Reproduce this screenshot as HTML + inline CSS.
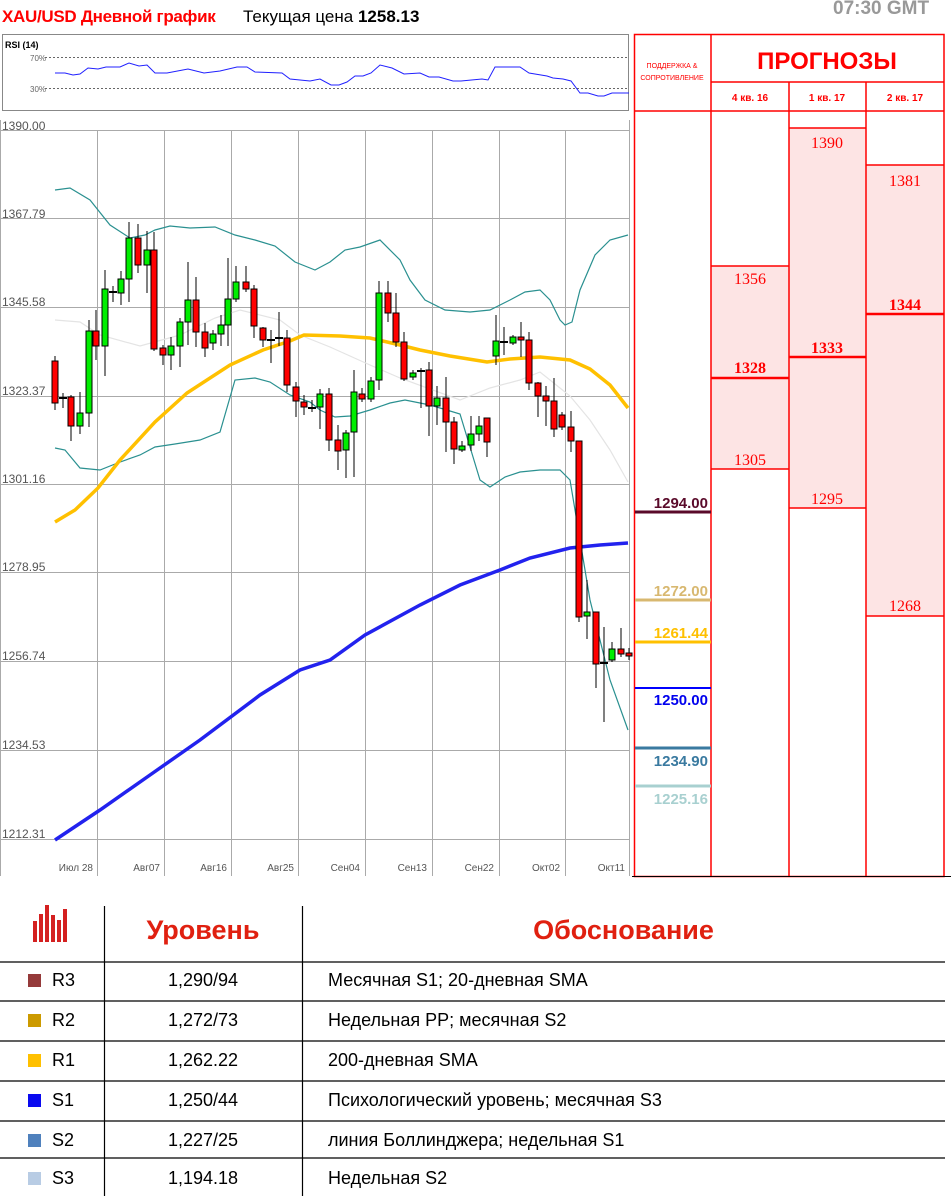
<!DOCTYPE html>
<html><head><meta charset="utf-8">
<style>
*{margin:0;padding:0;box-sizing:border-box}
body{width:951px;height:1200px;background:#fff;position:relative;overflow:hidden;font-family:"Liberation Sans",sans-serif}
.a{position:absolute;white-space:nowrap}
.tb{font-size:18px;color:#000}
</style></head><body>
<div class="a" style="left:2px;top:7px;font-size:17px;font-weight:bold;color:#f00;letter-spacing:-0.3px">XAU/USD Дневной график</div>
<div class="a" style="left:243px;top:7px;font-size:17px;color:#000">Текущая цена <b>1258.13</b></div>
<div class="a" style="left:833px;top:-2px;font-size:19px;line-height:22px;font-weight:bold;color:#999">07:30 GMT</div>

<svg class="a" style="left:0;top:0" width="634" height="880" viewBox="0 0 634 880">
<rect x="2.5" y="34.5" width="626" height="76" fill="#fff" stroke="#888"/>
<text x="5" y="48" font-size="9" font-weight="bold" font-family="Liberation Sans">RSI (14)</text>
<text x="30" y="61" font-size="8" fill="#666" font-family="Liberation Sans">70%</text>
<text x="30" y="92" font-size="8" fill="#666" font-family="Liberation Sans">30%</text>
<line x1="45" y1="57.5" x2="628" y2="57.5" stroke="#666" stroke-dasharray="2,2"/>
<line x1="45" y1="88.5" x2="628" y2="88.5" stroke="#666" stroke-dasharray="2,2"/>
<polyline fill="none" stroke="#2020ff" stroke-width="1" points="55,73 65,73 73,75 80,74 88,68 98,69 106,67 120,67 129,63 139,66 147,65 155,73 167,73 188,69 204,73 220,71 237,67 247,67 255,72 282,73 290,79 310,81 320,79 331,85 339,85 347,82 355,76 363,76 371,73 380,65 392,68 404,74 420,73 429,77 439,77 453,81 461,81 482,79 488,80 495,67 520,67 529,73 547,76 553,78 563,79 571,81 580,93 588,93 598,96 604,96 612,93 629,93"/>
<g font-family="Liberation Sans" font-size="12" fill="#555">
<text x="2" y="130">1390.00</text><text x="2" y="218">1367.79</text><text x="2" y="306">1345.58</text><text x="2" y="395">1323.37</text><text x="2" y="483">1301.16</text><text x="2" y="571">1278.95</text><text x="2" y="660">1256.74</text><text x="2" y="749">1234.53</text><text x="2" y="838">1212.31</text>
</g>
<g stroke="#aaa" stroke-width="1">
<line x1="0" y1="130.5" x2="629" y2="130.5"/><line x1="0" y1="218.5" x2="629" y2="218.5"/><line x1="0" y1="307.5" x2="629" y2="307.5"/><line x1="0" y1="396.5" x2="629" y2="396.5"/><line x1="0" y1="484.5" x2="629" y2="484.5"/><line x1="0" y1="572.5" x2="629" y2="572.5"/><line x1="0" y1="661.5" x2="629" y2="661.5"/><line x1="0" y1="750.5" x2="629" y2="750.5"/><line x1="0" y1="839.5" x2="629" y2="839.5"/>
<line x1="97.5" y1="130" x2="97.5" y2="876"/><line x1="164.5" y1="130" x2="164.5" y2="876"/><line x1="231.5" y1="130" x2="231.5" y2="876"/><line x1="298.5" y1="130" x2="298.5" y2="876"/><line x1="365.5" y1="130" x2="365.5" y2="876"/><line x1="432.5" y1="130" x2="432.5" y2="876"/><line x1="499.5" y1="130" x2="499.5" y2="876"/><line x1="565.5" y1="130" x2="565.5" y2="876"/><line x1="629.5" y1="120" x2="629.5" y2="876"/><line x1="0.5" y1="120" x2="0.5" y2="876"/>
</g>
<g font-family="Liberation Sans" font-size="10" fill="#555" text-anchor="end">
<text x="93" y="871">Июл 28</text><text x="160" y="871">Авг07</text><text x="227" y="871">Авг16</text><text x="294" y="871">Авг25</text><text x="360" y="871">Сен04</text><text x="427" y="871">Сен13</text><text x="494" y="871">Сен22</text><text x="560" y="871">Окт02</text><text x="625" y="871">Окт11</text>
</g>
<g fill="none">
<polyline stroke="#e4e4e4" stroke-width="1.2" points="55,320 80,322 100,335 140,346 180,335 215,318 240,310 280,320 300,335 330,347 370,365 400,378 460,400 490,388 520,380 540,372 570,396 590,420 610,450 628,482"/>
<polyline stroke="#2a9090" stroke-width="1.2" points="55,190 70,188 90,200 110,225 130,238 145,235 155,230 170,226 190,228 215,227 235,235 255,240 275,246 295,262 315,270 330,262 345,250 360,247 380,240 400,260 410,280 425,300 445,310 470,312 490,310 510,300 525,292 540,290 550,300 560,320 565,325 572,322 580,290 595,255 610,240 628,235"/>
<polyline stroke="#2a9090" stroke-width="1.2" points="55,448 65,450 80,468 100,470 120,462 140,455 155,447 175,444 200,440 220,432 235,380 255,378 270,382 290,395 310,402 320,410 335,417 350,416 370,410 390,403 405,400 430,405 460,414 480,480 490,487 505,477 520,472 540,470 560,470 570,480 575,510 590,600 610,680 628,730"/>
<polyline stroke="#ffc000" stroke-width="3.5" points="55,522 75,510 98,488 120,460 155,422 187,393 230,365 263,350 290,341 304,335 340,336 370,338 400,345 420,350 450,356 487,362 510,359 540,357 570,360 590,369 610,385 628,408"/>
<polyline stroke="#2222ee" stroke-width="3.5" points="55,840 100,810 150,775 200,740 260,695 300,670 330,660 365,635 420,605 460,585 500,570 530,558 570,548 600,545 628,543"/>
</g>
<g stroke="#000" stroke-width="1">
<line x1="55" y1="356" x2="55" y2="410"/><rect x="52" y="361" width="6" height="42" fill="#f00"/>
<line x1="63" y1="393" x2="63" y2="408"/><line x1="59" y1="398" x2="67" y2="398" stroke-width="2"/>
<line x1="71" y1="395" x2="71" y2="441"/><rect x="68" y="397" width="6" height="29" fill="#f00"/>
<line x1="80" y1="392" x2="80" y2="434"/><rect x="77" y="413" width="6" height="13" fill="#0e0"/>
<line x1="89" y1="320" x2="89" y2="427"/><rect x="86" y="331" width="6" height="82" fill="#0e0"/>
<line x1="96" y1="310" x2="96" y2="360"/><rect x="93" y="331" width="6" height="15" fill="#f00"/>
<line x1="105" y1="270" x2="105" y2="376"/><rect x="102" y="289" width="6" height="57" fill="#0e0"/>
<line x1="113" y1="286" x2="113" y2="302"/><line x1="109" y1="292" x2="117" y2="292" stroke-width="2"/>
<line x1="121" y1="271" x2="121" y2="305"/><rect x="118" y="279" width="6" height="14" fill="#0e0"/>
<line x1="129" y1="222" x2="129" y2="302"/><rect x="126" y="238" width="6" height="41" fill="#0e0"/>
<line x1="138" y1="224" x2="138" y2="273"/><rect x="135" y="238" width="6" height="27" fill="#f00"/>
<line x1="147" y1="231" x2="147" y2="293"/><rect x="144" y="250" width="6" height="15" fill="#0e0"/>
<line x1="154" y1="232" x2="154" y2="351"/><rect x="151" y="250" width="6" height="99" fill="#f00"/>
<line x1="163" y1="345" x2="163" y2="365"/><rect x="160" y="348" width="6" height="7" fill="#f00"/>
<line x1="171" y1="337" x2="171" y2="370"/><rect x="168" y="346" width="6" height="9" fill="#0e0"/>
<line x1="180" y1="318" x2="180" y2="367"/><rect x="177" y="322" width="6" height="24" fill="#0e0"/>
<line x1="188" y1="262" x2="188" y2="345"/><rect x="185" y="300" width="6" height="22" fill="#0e0"/>
<line x1="196" y1="277" x2="196" y2="347"/><rect x="193" y="300" width="6" height="32" fill="#f00"/>
<line x1="205" y1="323" x2="205" y2="357"/><rect x="202" y="332" width="6" height="16" fill="#f00"/>
<line x1="213" y1="330" x2="213" y2="350"/><rect x="210" y="334" width="6" height="9" fill="#0e0"/>
<line x1="221" y1="315" x2="221" y2="346"/><rect x="218" y="325" width="6" height="9" fill="#0e0"/>
<line x1="228" y1="258" x2="228" y2="346"/><rect x="225" y="299" width="6" height="26" fill="#0e0"/>
<line x1="236" y1="266" x2="236" y2="302"/><rect x="233" y="282" width="6" height="17" fill="#0e0"/>
<line x1="246" y1="266" x2="246" y2="292"/><rect x="243" y="282" width="6" height="7" fill="#f00"/>
<line x1="254" y1="285" x2="254" y2="338"/><rect x="251" y="289" width="6" height="37" fill="#f00"/>
<line x1="263" y1="327" x2="263" y2="347"/><rect x="260" y="328" width="6" height="12" fill="#f00"/>
<line x1="271" y1="330" x2="271" y2="363"/><line x1="267" y1="340" x2="275" y2="340" stroke-width="2"/>
<line x1="279" y1="312" x2="279" y2="346"/><line x1="275" y1="338" x2="283" y2="338" stroke-width="2"/>
<line x1="287" y1="330" x2="287" y2="392"/><rect x="284" y="338" width="6" height="47" fill="#f00"/>
<line x1="296" y1="382" x2="296" y2="417"/><rect x="293" y="387" width="6" height="14" fill="#f00"/>
<line x1="304" y1="395" x2="304" y2="415"/><rect x="301" y="402" width="6" height="5" fill="#f00"/>
<line x1="312" y1="400" x2="312" y2="412"/><line x1="308" y1="408" x2="316" y2="408" stroke-width="2"/>
<line x1="320" y1="389" x2="320" y2="429"/><rect x="317" y="394" width="6" height="13" fill="#0e0"/>
<line x1="329" y1="388" x2="329" y2="451"/><rect x="326" y="394" width="6" height="46" fill="#f00"/>
<line x1="338" y1="425" x2="338" y2="470"/><rect x="335" y="440" width="6" height="11" fill="#f00"/>
<line x1="346" y1="430" x2="346" y2="478"/><rect x="343" y="433" width="6" height="17" fill="#0e0"/>
<line x1="354" y1="370" x2="354" y2="477"/><rect x="351" y="392" width="6" height="40" fill="#0e0"/>
<line x1="362" y1="388" x2="362" y2="402"/><rect x="359" y="394" width="6" height="5" fill="#f00"/>
<line x1="371" y1="377" x2="371" y2="402"/><rect x="368" y="381" width="6" height="18" fill="#0e0"/>
<line x1="379" y1="281" x2="379" y2="390"/><rect x="376" y="293" width="6" height="87" fill="#0e0"/>
<line x1="388" y1="281" x2="388" y2="322"/><rect x="385" y="293" width="6" height="20" fill="#f00"/>
<line x1="396" y1="293" x2="396" y2="347"/><rect x="393" y="313" width="6" height="29" fill="#f00"/>
<line x1="404" y1="332" x2="404" y2="381"/><rect x="401" y="342" width="6" height="37" fill="#f00"/>
<line x1="413" y1="370" x2="413" y2="380"/><rect x="410" y="373" width="6" height="4" fill="#0e0"/>
<line x1="421" y1="368" x2="421" y2="408"/><line x1="417" y1="371" x2="425" y2="371" stroke-width="2"/>
<line x1="429" y1="362" x2="429" y2="436"/><rect x="426" y="370" width="6" height="36" fill="#f00"/>
<line x1="437" y1="386" x2="437" y2="425"/><rect x="434" y="398" width="6" height="8" fill="#0e0"/>
<line x1="446" y1="377" x2="446" y2="452"/><rect x="443" y="398" width="6" height="24" fill="#f00"/>
<line x1="454" y1="417" x2="454" y2="464"/><rect x="451" y="422" width="6" height="27" fill="#f00"/>
<line x1="462" y1="441" x2="462" y2="452"/><rect x="459" y="446" width="6" height="4" fill="#0e0"/>
<line x1="471" y1="416" x2="471" y2="451"/><rect x="468" y="434" width="6" height="11" fill="#0e0"/>
<line x1="479" y1="416" x2="479" y2="441"/><rect x="476" y="426" width="6" height="8" fill="#0e0"/>
<line x1="487" y1="418" x2="487" y2="457"/><rect x="484" y="418" width="6" height="24" fill="#f00"/>
<line x1="496" y1="315" x2="496" y2="365"/><rect x="493" y="341" width="6" height="15" fill="#0e0"/>
<line x1="504" y1="327" x2="504" y2="355"/><line x1="500" y1="342" x2="508" y2="342" stroke-width="2"/>
<line x1="513" y1="335" x2="513" y2="345"/><rect x="510" y="337" width="6" height="6" fill="#0e0"/>
<line x1="521" y1="322" x2="521" y2="357"/><rect x="518" y="337" width="6" height="3" fill="#f00"/>
<line x1="529" y1="332" x2="529" y2="390"/><rect x="526" y="340" width="6" height="43" fill="#f00"/>
<line x1="538" y1="382" x2="538" y2="417"/><rect x="535" y="383" width="6" height="13" fill="#f00"/>
<line x1="546" y1="386" x2="546" y2="426"/><rect x="543" y="396" width="6" height="5" fill="#f00"/>
<line x1="554" y1="378" x2="554" y2="437"/><rect x="551" y="401" width="6" height="28" fill="#f00"/>
<line x1="562" y1="412" x2="562" y2="430"/><rect x="559" y="415" width="6" height="12" fill="#f00"/>
<line x1="571" y1="411" x2="571" y2="452"/><rect x="568" y="427" width="6" height="14" fill="#f00"/>
<line x1="579" y1="441" x2="579" y2="622"/><rect x="576" y="441" width="6" height="176" fill="#f00"/>
<line x1="587" y1="580" x2="587" y2="639"/><rect x="584" y="612" width="6" height="4" fill="#0e0"/>
<line x1="596" y1="612" x2="596" y2="688"/><rect x="593" y="612" width="6" height="52" fill="#f00"/>
<line x1="604" y1="627" x2="604" y2="722"/><line x1="600" y1="663" x2="608" y2="663" stroke-width="2"/>
<line x1="612" y1="642" x2="612" y2="662"/><rect x="609" y="649" width="6" height="11" fill="#0e0"/>
<line x1="621" y1="628" x2="621" y2="657"/><rect x="618" y="649" width="6" height="5" fill="#f00"/>
<line x1="629" y1="648" x2="629" y2="660"/><rect x="626" y="653" width="6" height="3" fill="#f00"/>
</g>
</svg>

<svg class="a" style="left:632px;top:0" width="319" height="880" viewBox="632 0 319 880">
<rect x="711" y="266" width="78" height="203" fill="#fde4e4"/>
<rect x="789" y="128" width="77" height="380" fill="#fde4e4"/>
<rect x="866" y="165" width="78" height="451" fill="#fde4e4"/>
<g stroke="#f00" stroke-width="1.5" fill="none">
<rect x="634.5" y="34.5" width="309.5" height="842"/>
<line x1="711" y1="34" x2="711" y2="876"/><line x1="789" y1="82" x2="789" y2="876"/><line x1="866" y1="82" x2="866" y2="876"/>
<line x1="711" y1="82" x2="944" y2="82"/><line x1="634" y1="111" x2="944" y2="111"/>
<line x1="711" y1="266" x2="789" y2="266"/><line x1="711" y1="469" x2="789" y2="469"/>
<line x1="789" y1="128" x2="866" y2="128"/><line x1="789" y1="508" x2="866" y2="508"/>
<line x1="866" y1="165" x2="944" y2="165"/><line x1="866" y1="616" x2="944" y2="616"/>
<line x1="711" y1="378" x2="789" y2="378" stroke-width="2.5"/>
<line x1="789" y1="357" x2="866" y2="357" stroke-width="2.5"/>
<line x1="866" y1="314" x2="944" y2="314" stroke-width="2.5"/>
</g>
<line x1="0" y1="876.5" x2="951" y2="876.5" stroke="#000"/>
<g stroke-width="3">
<line x1="635" y1="512" x2="711" y2="512" stroke="#5a0a2a"/>
<line x1="635" y1="600" x2="711" y2="600" stroke="#d8b870"/>
<line x1="635" y1="642" x2="711" y2="642" stroke="#ffc000"/>
<line x1="635" y1="688" x2="711" y2="688" stroke="#0000ff" stroke-width="2"/>
<line x1="635" y1="748" x2="711" y2="748" stroke="#3a7aa0"/>
<line x1="635" y1="786" x2="711" y2="786" stroke="#a8d0d0"/>
</g>
<g font-family="Liberation Sans" font-weight="bold" font-size="15" text-anchor="end">
<text x="708" y="508" fill="#5a0a2a">1294.00</text>
<text x="708" y="596" fill="#d8b870">1272.00</text>
<text x="708" y="638" fill="#ffc000">1261.44</text>
<text x="708" y="705" fill="#0000ee">1250.00</text>
<text x="708" y="766" fill="#3a7aa0">1234.90</text>
<text x="708" y="804" fill="#a8d0d0">1225.16</text>
</g>
<g font-family="Liberation Sans" fill="#f00" text-anchor="middle">
<text x="672" y="68" font-size="7">ПОДДЕРЖКА &amp;</text>
<text x="672" y="80" font-size="7">СОПРОТИВЛЕНИЕ</text>
<text x="827" y="69" font-size="24" font-weight="bold">ПРОГНОЗЫ</text>
<text x="750" y="101" font-size="10" font-weight="bold">4 кв. 16</text>
<text x="827" y="101" font-size="10" font-weight="bold">1 кв. 17</text>
<text x="905" y="101" font-size="10" font-weight="bold">2 кв. 17</text>
</g>
<g font-family="Liberation Serif" fill="#f00" text-anchor="middle" font-size="16">
<text x="750" y="284">1356</text><text x="750" y="373" font-weight="bold">1328</text><text x="750" y="465">1305</text>
<text x="827" y="148">1390</text><text x="827" y="353" font-weight="bold">1333</text><text x="827" y="504">1295</text>
<text x="905" y="186">1381</text><text x="905" y="310" font-weight="bold">1344</text><text x="905" y="611">1268</text>
</g>
</svg>

<svg class="a" style="left:0;top:880px" width="951" height="320">
<g fill="#d42020">
<rect x="33" y="41" width="4" height="21"/><rect x="39" y="34" width="4" height="28"/><rect x="45" y="25" width="4" height="37"/><rect x="51" y="35" width="4" height="27"/><rect x="57" y="40" width="4" height="22"/><rect x="63" y="29" width="4" height="33"/>
</g>
<g stroke="#000" stroke-width="1.2">
<line x1="104.5" y1="26" x2="104.5" y2="316"/><line x1="302.5" y1="26" x2="302.5" y2="316"/>
<line x1="0" y1="82" x2="945" y2="82"/><line x1="0" y1="121" x2="945" y2="121"/><line x1="0" y1="161" x2="945" y2="161"/><line x1="0" y1="201" x2="945" y2="201"/><line x1="0" y1="241" x2="945" y2="241"/><line x1="0" y1="278" x2="945" y2="278"/>
</g>
</svg>
<div class="a" style="left:104px;width:198px;top:915px;text-align:center;font-size:27px;font-weight:bold;color:#e02010">Уровень</div>
<div class="a" style="left:302px;width:643px;top:915px;text-align:center;font-size:27px;font-weight:bold;color:#e02010">Обоснование</div>

<div class="a" style="left:28px;top:974px;width:13px;height:13px;background:#953a3a"></div>
<div class="a" style="left:28px;top:1014px;width:13px;height:13px;background:#cc9a00"></div>
<div class="a" style="left:28px;top:1054px;width:13px;height:13px;background:#ffc000"></div>
<div class="a" style="left:28px;top:1094px;width:13px;height:13px;background:#0a0af0"></div>
<div class="a" style="left:28px;top:1134px;width:13px;height:13px;background:#4f81bd"></div>
<div class="a" style="left:28px;top:1172px;width:13px;height:13px;background:#b8cce4"></div>

<div class="a tb" style="left:52px;top:970px">R3</div>
<div class="a tb" style="left:52px;top:1010px">R2</div>
<div class="a tb" style="left:52px;top:1050px">R1</div>
<div class="a tb" style="left:52px;top:1090px">S1</div>
<div class="a tb" style="left:52px;top:1130px">S2</div>
<div class="a tb" style="left:52px;top:1168px">S3</div>

<div class="a tb" style="left:104px;width:198px;text-align:center;top:970px">1,290/94</div>
<div class="a tb" style="left:104px;width:198px;text-align:center;top:1010px">1,272/73</div>
<div class="a tb" style="left:104px;width:198px;text-align:center;top:1050px">1,262.22</div>
<div class="a tb" style="left:104px;width:198px;text-align:center;top:1090px">1,250/44</div>
<div class="a tb" style="left:104px;width:198px;text-align:center;top:1130px">1,227/25</div>
<div class="a tb" style="left:104px;width:198px;text-align:center;top:1168px">1,194.18</div>

<div class="a tb" style="left:328px;top:970px">Месячная S1; 20-дневная SMA</div>
<div class="a tb" style="left:328px;top:1010px">Недельная PP; месячная S2</div>
<div class="a tb" style="left:328px;top:1050px">200-дневная SMA</div>
<div class="a tb" style="left:328px;top:1090px">Психологический уровень; месячная S3</div>
<div class="a tb" style="left:328px;top:1130px">линия Боллинджера; недельная S1</div>
<div class="a tb" style="left:328px;top:1168px">Недельная S2</div>
</body></html>
